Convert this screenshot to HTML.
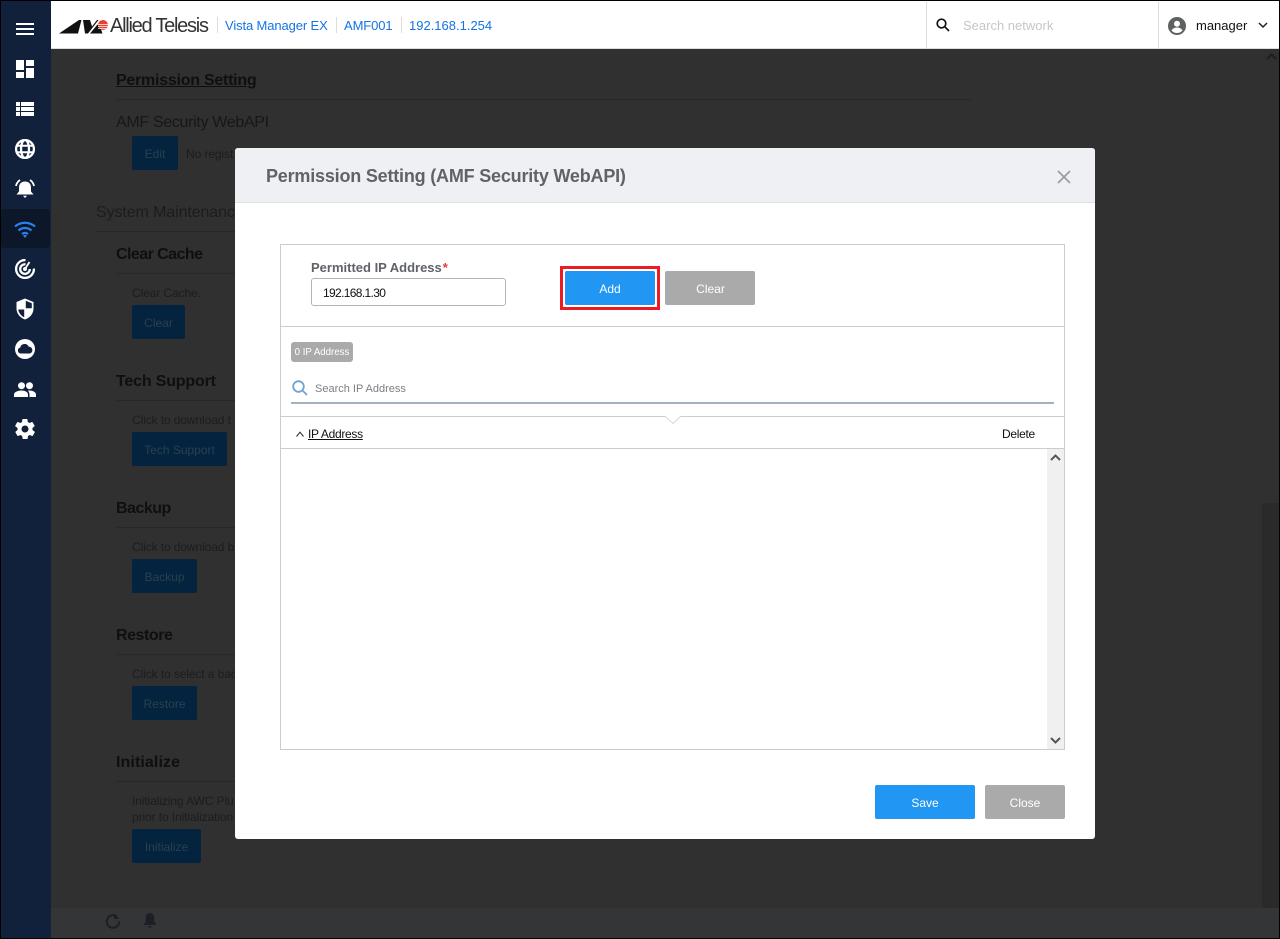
<!DOCTYPE html>
<html><head><meta charset="utf-8"><style>
html,body{margin:0;padding:0;width:1280px;height:939px;overflow:hidden;background:#000}
*{box-sizing:border-box}
body{font-family:"Liberation Sans",sans-serif;position:relative}
.a{position:absolute;white-space:nowrap}
.h{font-weight:bold;font-size:16px;color:#0f0f0f;line-height:20px}
.t{font-size:12px;color:#1c1c1c;line-height:16px;letter-spacing:-.1px}
.db{background:#04233f;color:#29404f;font-size:12px;text-align:center;border-radius:2px;height:34px;line-height:36px}
.ln{height:1px;background:#282828}
.btn{color:#fff;font-size:12px;text-align:center;border-radius:2px;height:34px;line-height:36px}
svg{position:absolute;display:block}
</style></head><body>
<div class="a" style="left:1px;top:1px;width:1278px;height:937px;background:#303030;overflow:hidden"></div>
<div class="a" style="left:1px;top:1px;width:50px;height:937px;background:#11213c"></div>
<div class="a" style="left:1px;top:209px;width:49px;height:39px;background:#0c1729;border-radius:4px"></div>
<div class="a" style="left:51px;top:1px;width:1228px;height:48px;background:#fff;border-bottom:1px solid #ddd"></div>
<div class="a" style="left:51px;top:908px;width:1228px;height:30px;background:#333536"></div>
<div class="a" style="left:1262px;top:503px;width:17px;height:405px;background:#2a2a2a"></div>

<!-- sidebar icons -->
<svg style="left:16px;top:23px" width="18" height="12"><path d="M0 0h18v2H0zM0 5h18v2H0zM0 10h18v2H0z" fill="#fff"/></svg>
<svg style="left:16px;top:60px" width="18" height="18"><path d="M0 0h8v10H0zM10 0h8v6h-8zM10 8h8v10h-8zM0 12h8v6H0z" fill="#fff"/></svg>
<svg style="left:16px;top:102px" width="18" height="14"><path d="M0 0h4v4H0zM5 0h13v4H5zM0 5h4v4H0zM5 5h13v4H5zM0 10h4v4H0zM5 10h13v4H5z" fill="#fff"/></svg>
<svg style="left:15px;top:139px" width="20" height="20" fill="none" stroke="#fff" stroke-width="2.300"><circle cx="10" cy="10" r="8.900"/><ellipse cx="10" cy="10" rx="4" ry="9"/><path d="M1 6.800h18M1 13.200h18" stroke-width="2"/></svg>
<svg style="left:15px;top:179px" width="20" height="20"><path d="M10 2.500c-4 0-6 2.700-6 6v4l-2.500 3h17L16 12.500v-4c0-3.300-2-6-6-6zM8 16.800h4L10 19z" fill="#fff"/><path d="M5 1C2.800 2.500 1.500 4.300 1 7M15 1c2.200 1.500 3.500 3.300 4 6" fill="none" stroke="#fff" stroke-width="1.800"/></svg>
<svg style="left:14px;top:221px" width="22" height="17" fill="none" stroke="#2a7fe8" stroke-width="2.300"><path d="M1 5.500c6-5 14-5 20 0M4.500 9.500c4-3.300 9-3.300 13 0"/><path d="M8 13c2-1.500 4-1.500 6 0"/><path d="M9 14.500L11 17l2-2.500c-1.300-.9-2.700-.9-4 0z" fill="#2a7fe8" stroke="none"/></svg>
<svg style="left:15px;top:259px" width="20" height="20" fill="none" stroke="#fff" stroke-width="2.300"><path d="M10.500 1.100A8.900 8.900 0 1 0 18.900 9.500"/><path d="M10.500 5.300A4.800 4.800 0 1 0 14.800 10"/><circle cx="10" cy="10" r="1.500" fill="#fff" stroke-width="1"/><path d="M10 10l4.500-7" stroke-width="1.800"/></svg>
<svg style="left:16px;top:298px" width="18" height="22"><path d="M9 .5l8.500 3.500v6.500c0 5-3.500 9.300-8.500 11-5-1.700-8.500-6-8.500-11V4z" fill="#fff"/><path d="M9.800 2.800l6 2.400v5H9.800zM8.200 11.500v7.800c-3-1.300-5.400-4.300-6-7.800z" fill="#11213c"/></svg>
<svg style="left:15px;top:339px" width="20" height="20"><circle cx="10" cy="10" r="10" fill="#fff"/><path d="M5.500 14.500a3 3 0 0 1-.3-5.900 4.500 4.500 0 0 1 8.600-.8 3.400 3.400 0 0 1 1 6.700z" fill="#11213c"/></svg>
<svg style="left:14px;top:382px" width="22" height="15" fill="#fff"><circle cx="7.500" cy="3.700" r="3.500"/><circle cx="15.500" cy="3.700" r="3.500"/><path d="M0 15v-2.500C0 10 4 8.500 7.500 8.500S14 10 14 12.500V15zM15.500 15v-2.500c0-1.500-.5-2.800-1.600-3.800.6-.1 1.100-.2 1.600-.2 3 0 6.500 1.500 6.500 4V15z"/></svg>
<svg style="left:13px;top:417px" width="24" height="24" viewBox="0 0 24 24"><path fill="#fff" d="M19.400 13c.1-.3.100-.7.100-1s0-.7-.1-1l2.100-1.700c.2-.1.200-.4.100-.6l-2-3.500c-.1-.2-.4-.3-.6-.2l-2.500 1c-.5-.4-1.100-.7-1.700-1l-.4-2.600c0-.2-.2-.4-.5-.4h-4c-.2 0-.5.200-.5.400l-.4 2.600c-.6.300-1.200.6-1.700 1l-2.500-1c-.2-.1-.5 0-.6.200l-2 3.500c-.1.200-.1.500.1.600L4.600 11c-.1.300-.1.700-.1 1s0 .7.100 1l-2.100 1.700c-.2.100-.2.400-.1.600l2 3.500c.1.200.4.300.6.200l2.500-1c.5.400 1.100.7 1.700 1l.4 2.600c0 .2.300.4.500.4h4c.3 0 .5-.2.500-.4l.4-2.600c.6-.3 1.200-.6 1.700-1l2.500 1c.2.100.5 0 .6-.2l2-3.500c.1-.2.100-.5-.1-.6zM12 15.500a3.500 3.500 0 1 1 0-7 3.500 3.500 0 0 1 0 7z"/></svg>

<!-- header logo -->
<svg style="left:59px;top:19px" width="50" height="16"><path d="M0 14.500L20 1h2.500L19 14.500zM24 1h7l2 6.500L38 1h1.500L29 14.500h-3zM31 14.500L38.500 5.500 41.500 9 43.500 14.500z" fill="#111"/><circle cx="44" cy="6" r="5" fill="#e8412f"/><path d="M39 5h10v.8H39zM39 7h10v.8H39zM39 9h10v.8H39z" fill="#fff"/></svg>
<div class="a" style="left:110px;top:14px;font-size:20px;line-height:24px;color:#333;letter-spacing:-1.250px">Allied Telesis</div>
<div class="a" style="left:217px;top:17px;width:1px;height:16px;background:#ddd"></div>
<div class="a" style="left:336px;top:17px;width:1px;height:16px;background:#ddd"></div>
<div class="a" style="left:401px;top:17px;width:1px;height:16px;background:#ddd"></div>
<div class="a" style="left:225px;top:17px;font-size:13px;line-height:17px;color:#1473e6;letter-spacing:-.12px">Vista Manager EX</div>
<div class="a" style="left:344px;top:17px;font-size:13px;line-height:17px;color:#1473e6;letter-spacing:-.1px">AMF001</div>
<div class="a" style="left:409px;top:17px;font-size:13px;line-height:17px;color:#1473e6">192.168.1.254</div>
<div class="a" style="left:926px;top:2px;width:1px;height:46px;background:#ddd"></div>
<div class="a" style="left:1158px;top:2px;width:1px;height:46px;background:#ddd"></div>
<svg style="left:936px;top:18px" width="14" height="14" fill="none" stroke="#111" stroke-width="1.700"><circle cx="5.500" cy="5.500" r="4.300"/><path d="M8.700 8.700L13 13"/></svg>
<div class="a" style="left:963px;top:17px;font-size:13px;line-height:17px;color:#c4c6cb">Search network</div>
<svg style="left:1168px;top:17px" width="18" height="18"><circle cx="9" cy="9" r="9" fill="#5f6062"/><circle cx="9" cy="6.700" r="3" fill="#fff"/><path d="M3.500 13.500c1-2 3.500-3 5.500-3s4.500 1 5.500 3c-1.300 1.500-3.300 2.500-5.500 2.500s-4.200-1-5.500-2.500z" fill="#fff"/></svg>
<div class="a" style="left:1196px;top:17px;font-size:13px;line-height:17px;color:#111">manager</div>
<svg style="left:1258px;top:22px" width="10" height="7" fill="none" stroke="#222" stroke-width="1.500"><path d="M1 1l4 4 4-4"/></svg>
<svg style="left:1266px;top:53px" width="11" height="7" fill="none" stroke="#1e1e1e" stroke-width="2"><path d="M1 6l4.500-4.500L10 6"/></svg>

<!-- background content -->
<div class="a h" style="left:116px;top:71px;text-decoration:underline;letter-spacing:-.25px">Permission Setting</div>
<div class="a ln" style="left:116px;top:99px;width:855px"></div>
<div class="a" style="left:116px;top:113px;font-size:16px;line-height:20px;color:#171717;letter-spacing:-.32px">AMF Security WebAPI</div>
<div class="a db" style="left:132px;top:136px;width:46px">Edit</div>
<div class="a t" style="left:186px;top:146px">No regist</div>
<div class="a" style="left:96px;top:203px;font-size:16px;line-height:20px;color:#1c1c1c;letter-spacing:-.1px">System Maintenance</div>
<div class="a ln" style="left:96px;top:231px;width:140px"></div>

<div class="a h" style="left:116px;top:245px;letter-spacing:-.55px">Clear Cache</div>
<div class="a ln" style="left:116px;top:273px;width:120px"></div>
<div class="a t" style="left:132px;top:285px">Clear Cache.</div>
<div class="a db" style="left:132px;top:305px;width:53px">Clear</div>

<div class="a h" style="left:116px;top:372px;letter-spacing:-.18px">Tech Support</div>
<div class="a ln" style="left:116px;top:400px;width:120px"></div>
<div class="a t" style="left:132px;top:412px">Click to download t</div>
<div class="a db" style="left:132px;top:432px;width:95px">Tech Support</div>

<div class="a h" style="left:116px;top:499px;letter-spacing:-.5px">Backup</div>
<div class="a ln" style="left:116px;top:527px;width:120px"></div>
<div class="a t" style="left:132px;top:539px">Click to download b</div>
<div class="a db" style="left:132px;top:559px;width:65px">Backup</div>

<div class="a h" style="left:116px;top:626px;letter-spacing:-.45px">Restore</div>
<div class="a ln" style="left:116px;top:654px;width:120px"></div>
<div class="a t" style="left:132px;top:666px">Click to select a bac</div>
<div class="a db" style="left:132px;top:686px;width:65px">Restore</div>

<div class="a h" style="left:116px;top:753px;letter-spacing:.1px">Initialize</div>
<div class="a ln" style="left:116px;top:781px;width:120px"></div>
<div class="a t" style="left:132px;top:793px">Initializing AWC Plu</div>
<div class="a t" style="left:132px;top:809px">prior to Initialization</div>
<div class="a db" style="left:132px;top:829px;width:69px">Initialize</div>

<svg style="left:105px;top:913px" width="16" height="16" fill="none" stroke="#1c2026" stroke-width="2"><path d="M11.800 3.500A6.300 6.300 0 1 0 14.300 8.500"/><path d="M9 0v6h5z" fill="#1c2026" stroke="none"/></svg>
<svg style="left:143px;top:913px" width="14" height="15"><path d="M7 0c-3 0-4.300 2.300-4.300 5v4L1 11v1h12v-1l-1.700-2V5C11.300 2.300 10 0 7 0zM5.500 13h3v1.500h-3z" fill="#1c2026"/></svg>

<!-- modal -->
<div class="a" style="left:235px;top:148px;width:860px;height:691px;background:#fff;border-radius:3px;overflow:hidden">
  <div style="height:55px;background:#eff0f4;border-bottom:1px solid #dfe0e4"></div>
</div>
<div class="a" style="left:266px;top:165px;font-size:18px;font-weight:bold;line-height:23px;color:#5f6268;letter-spacing:-.2px">Permission Setting (AMF Security WebAPI)</div>
<svg style="left:1057px;top:170px" width="14" height="14" fill="none" stroke="#9a9da8" stroke-width="1.800"><path d="M1 1l12 12M13 1L1 13"/></svg>

<div class="a" style="left:280px;top:244px;width:785px;height:506px;border:1px solid #ccc"></div>
<div class="a" style="left:281px;top:326px;width:783px;height:1px;background:#ccc"></div>
<div class="a" style="left:311px;top:259px;font-size:13px;font-weight:bold;line-height:17px;color:#5f6268">Permitted IP Address<span style="color:#e8392f;margin-left:1px">*</span></div>
<div class="a" style="left:311px;top:278px;width:195px;height:28px;border:1px solid #b5b5b5;border-radius:3px;background:#fff;font-size:12px;line-height:28px;padding-left:11px;color:#111;letter-spacing:-.65px">192.168.1.30</div>
<div class="a" style="left:560px;top:266px;width:100px;height:44px;border:3px solid #ed1c24;background:#fff"></div>
<div class="a btn" style="left:565px;top:271px;width:90px;background:#2196f3">Add</div>
<div class="a btn" style="left:665px;top:271px;width:90px;background:#aaa;padding-left:1px">Clear</div>

<div class="a" style="left:291px;top:342px;width:62px;height:20px;background:#aaa;border-radius:3px;color:#fff;font-size:9.700px;line-height:21px;text-align:center">0 IP Address</div>
<svg style="left:292px;top:380px" width="16" height="16" fill="none" stroke="#6fa3d4" stroke-width="1.800"><circle cx="6.500" cy="6.500" r="5.300"/><path d="M10.500 10.500L15 15"/></svg>
<div class="a" style="left:315px;top:381px;font-size:11px;line-height:16px;color:#7b7f85">Search IP Address</div>
<div class="a" style="left:291px;top:402px;width:763px;height:2px;background:#9fb3c5"></div>
<div class="a" style="left:281px;top:416px;width:783px;height:1px;background:#ccc"></div>
<svg style="left:664px;top:416px" width="18" height="9"><path d="M1 0l8 7.500L17 0" fill="#fff" stroke="#d5d9dd"/></svg>
<svg style="left:296px;top:431px" width="8" height="6" fill="none" stroke="#333" stroke-width="1.100"><path d="M.5 5.500L4 1.200l3.500 4.300"/></svg>
<div class="a" style="left:308px;top:426px;font-size:12px;line-height:16px;color:#111;text-decoration:underline;letter-spacing:-.3px">IP Address</div>
<div class="a" style="left:1002px;top:426px;font-size:12px;line-height:16px;color:#111;letter-spacing:-.3px">Delete</div>
<div class="a" style="left:281px;top:448px;width:783px;height:1px;background:#ccc"></div>
<div class="a" style="left:1047px;top:449px;width:17px;height:300px;background:#f0f0f0"></div>
<svg style="left:1050px;top:453px" width="11" height="8" fill="none" stroke="#555" stroke-width="2"><path d="M1 7l4.500-4.500L10 7"/></svg>
<svg style="left:1050px;top:737px" width="11" height="8" fill="none" stroke="#555" stroke-width="2"><path d="M1 1l4.500 4.500L10 1"/></svg>

<div class="a btn" style="left:875px;top:785px;width:100px;background:#2196f3">Save</div>
<div class="a btn" style="left:985px;top:785px;width:80px;background:#aaa">Close</div>
</body></html>
